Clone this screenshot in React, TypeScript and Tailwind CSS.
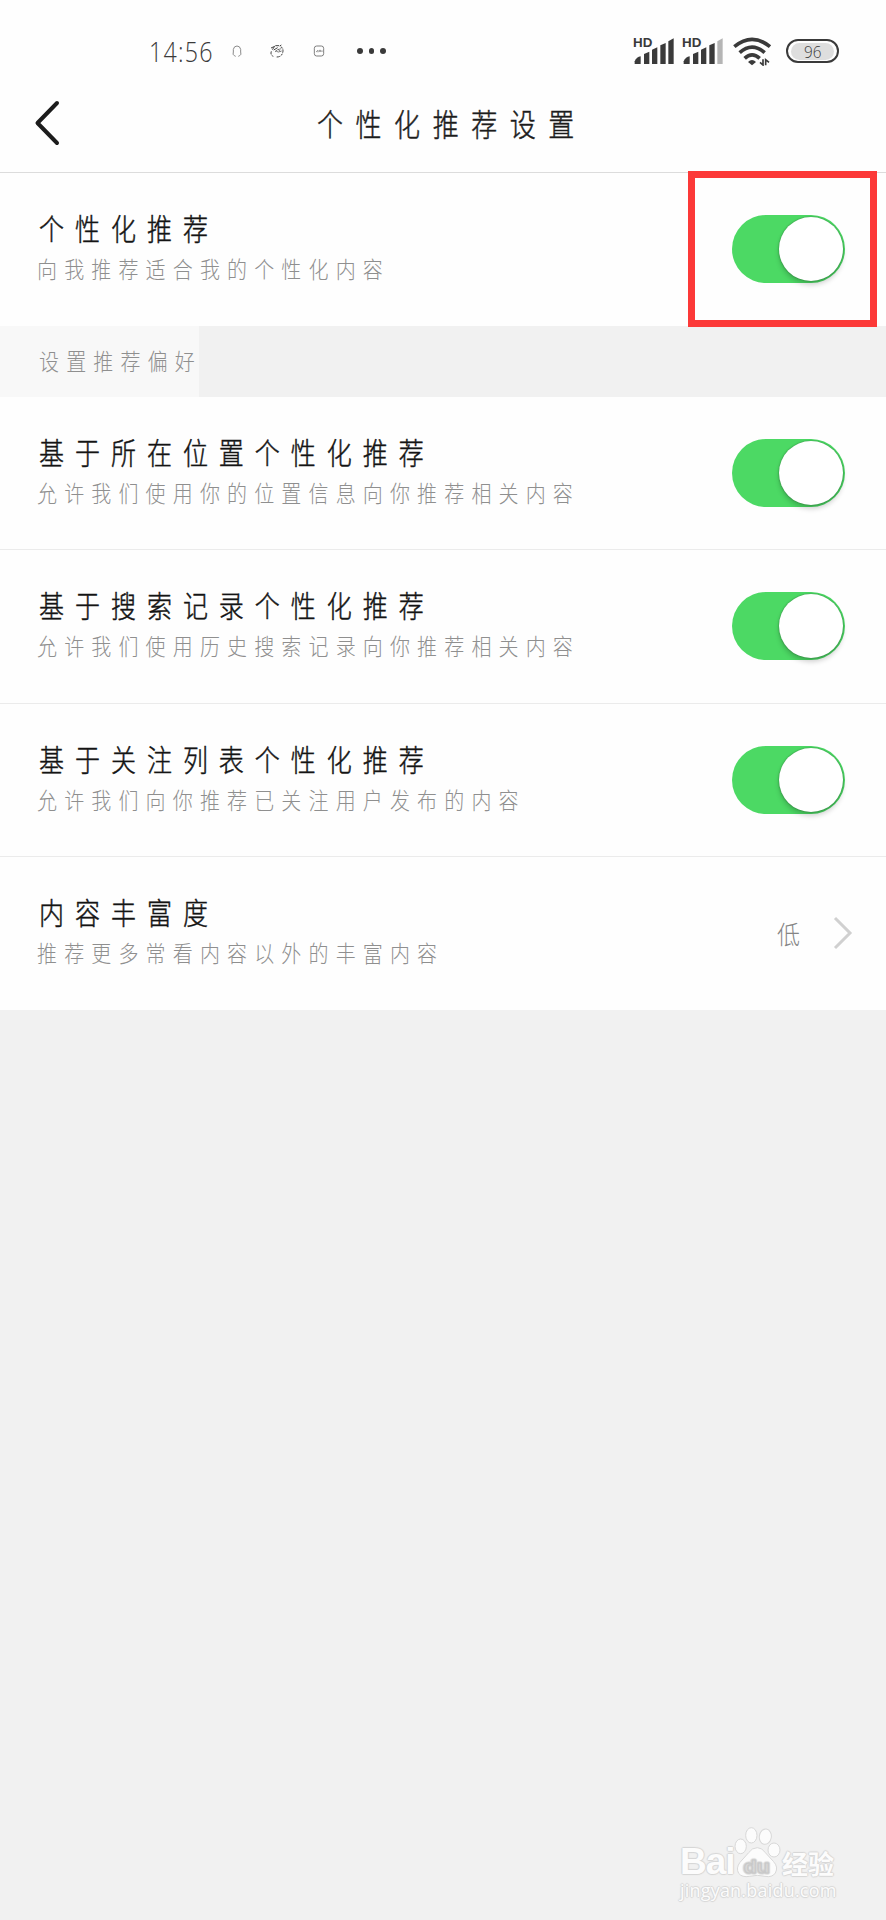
import React, { useState } from "react";

const preferences = [
  {
    title: "基于所在位置个性化推荐",
    desc: "允许我们使用你的位置信息向你推荐相关内容",
  },
  {
    title: "基于搜索记录个性化推荐",
    desc: "允许我们使用历史搜索记录向你推荐相关内容",
  },
  {
    title: "基于关注列表个性化推荐",
    desc: "允许我们向你推荐已关注用户发布的内容",
  },
];

function Signal({ weak = false }: { weak?: boolean }) {
  return (
    <svg className="h-[30px] w-[42px]" viewBox="0 0 126 90" fill="#3a3a3a">
      <text
        x="0"
        y="34"
        fontSize="40"
        fontWeight="700"
        textLength="58"
        lengthAdjust="spacingAndGlyphs"
        fontFamily="Liberation Sans, Arial, sans-serif"
      >
        HD
      </text>
      <path d="M5 84V76Q11 63 23 61V84Z" />
      <path d="M33 84V54L49 47V84Z" />
      <path d="M57 84V41L73 34V84Z" />
      <path d="M82 84V28L98 21V84Z" />
      <path d="M106 84V16L122 7V84Z" fill={weak ? "#b5b5b5" : "#3a3a3a"} />
    </svg>
  );
}

function StatusBar() {
  return (
    <div className="flex h-[80px] items-center pt-[22px] pl-[149px] text-[#3a3a3a]">
      <div className="w-[66px]">
        <span className="inline-block origin-left scale-x-[0.83] font-['Open_Sans',sans-serif] text-[28px] leading-[30px] font-light tracking-[1.5px]">
          14:56
        </span>
      </div>
      <svg className="ml-[16px] h-[14px] w-[12px]" viewBox="0 0 36 42" fill="none" stroke="#8a8a8a" strokeWidth="3">
        <path d="M10 35Q4 32 7 24V16Q9 6 18 6T29 16V24Q32 32 26 35M10 35L14 37M26 35L22 37" />
      </svg>
      <svg className="ml-[26px] h-[16px] w-[16px]" viewBox="0 0 48 48" fill="none" stroke="#444" strokeWidth="3">
        <path d="M7 25Q3 36 13 40M23 42Q40 42 42 24Q42 12 35 12" strokeDasharray="9 3" />
        <path d="M6 15L17 10L10 20M14 21L26 14M19 8H30M32 9L37 6" />
        <path d="M18 27Q24 18 37 17M20 23Q26 31 38 24M27 19L34 25" strokeWidth="2" />
      </svg>
      <svg className="ml-[27px] h-[14px] w-[14px]" viewBox="0 0 42 42" fill="none" stroke="#666" strokeWidth="2.5">
        <rect x="7" y="6" width="28" height="30" rx="7" />
        <path d="M12 24L18 19V25M22 24V19H26V24M30 19V24" strokeWidth="2" />
      </svg>
      <div className="ml-[31px] flex gap-[6px]">
        <i className="size-[5.5px] rounded-full bg-[#3a3a3a]" />
        <i className="size-[5.5px] rounded-full bg-[#3a3a3a]" />
        <i className="size-[5.5px] rounded-full bg-[#3a3a3a]" />
      </div>
      <div className="ml-auto flex items-center pr-[47px]">
        <Signal />
        <div className="ml-[7px]">
          <Signal weak />
        </div>
        <svg className="ml-[9px] h-[30px] w-[39px]" viewBox="0 0 117 90" fill="none" stroke="#3a3a3a" strokeWidth="11">
          <path d="M4 32Q57 -12 111 32" />
          <path d="M20 50Q57 17 95 50" />
          <path d="M35 67Q57 46 80 67" />
          <path d="M45 78Q57 66 69 78L57 88Z" fill="#3a3a3a" stroke="none" />
          <path d="M90 70V87L81 79M98 88V71L108 79" strokeWidth="5" />
        </svg>
        <div className="ml-[14px] flex h-[24px] w-[53px] items-center justify-center rounded-full border-2 border-[#3a3a3a]">
          <div className="flex h-[17px] w-[43px] items-center justify-center rounded-full bg-[#dedede]">
            <span className="inline-block scale-x-90 font-['Open_Sans',sans-serif] text-[17px] leading-[17px] font-light">
              96
            </span>
          </div>
        </div>
      </div>
    </div>
  );
}

function Switch({ label }: { label: string }) {
  const [on, setOn] = useState(true);
  return (
    <button
      role="switch"
      aria-checked={on}
      aria-label={label}
      onClick={() => setOn(!on)}
      className={`flex h-[68px] w-[113px] shrink-0 items-center rounded-full px-[2px] ${
        on ? "justify-end bg-[#4cd964]" : "justify-start bg-[#dcdcdc]"
      }`}
    >
      <span className="size-[64px] rounded-full bg-white shadow-[0_4px_5px_rgba(0,0,0,0.18),0_0_2px_rgba(0,0,0,0.4)]" />
    </button>
  );
}

function Row({
  title,
  desc,
  last = false,
  children,
}: {
  title: string;
  desc: string;
  last?: boolean;
  children: React.ReactNode;
}) {
  return (
    <div
      className={`flex items-start justify-between bg-[#fefefe] pr-[41px] ${
        last ? "h-[153px]" : "h-[153.5px] border-b border-[#ebebeb]"
      }`}
    >
      <div className="pt-[34px] whitespace-nowrap">
        <div className="origin-center scale-y-[1.17] pl-[39px] text-[25px] leading-10 tracking-[10.97px] text-[#141414] [-webkit-text-stroke:0.4px_#141414]">
          {title}
        </div>
        <div className="mt-[2px] scale-y-[1.13] pl-[37px] text-[20px] leading-10 tracking-[7.15px] text-[#8f8f8f]">
          {desc}
        </div>
      </div>
      <div className="flex h-[152px] items-center">{children}</div>
    </div>
  );
}

function Watermark() {
  return (
    <div className="absolute top-[1822px] left-[680px] w-[160px] text-[#fcfcfc] [text-shadow:1px_0_1px_#d6d6d6,-1px_0_1px_#d6d6d6,0_1px_1px_#d6d6d6,0_-1px_1px_#d6d6d6]">
      <div className="flex h-[56px] items-end">
        <span className="mb-[-4px] w-[54px] font-['Liberation_Sans',Arial,sans-serif] text-[37px] leading-[40px] font-bold tracking-[-1px]">
          Bai
        </span>
        <svg className="h-[54px] w-[48px] shrink-0" viewBox="0 0 144 162" fill="#fcfcfc" stroke="#d8d8d8" strokeWidth="3">
          <ellipse cx="20" cy="67" rx="17" ry="22" />
          <ellipse cx="52" cy="34" rx="17" ry="23" />
          <ellipse cx="94" cy="38" rx="18" ry="23" transform="rotate(8 94 38)" />
          <ellipse cx="120" cy="78" rx="18" ry="21" />
          <path d="M70 71Q84 71 94 86L118 112Q134 129 124 147Q115 161 93 157Q70 151 47 157Q24 161 14 148Q5 132 18 115L44 86Q54 71 70 71Z" />
          <text
            x="29"
            y="146"
            fontSize="56"
            fontWeight="700"
            fill="#e6e6e6"
            stroke="#c8c8c8"
            textLength="78"
            lengthAdjust="spacingAndGlyphs"
            fontFamily="Liberation Sans, Arial, sans-serif"
          >
            du
          </text>
        </svg>
        <span className="-mb-px text-[26px] leading-[32px] font-bold">经验</span>
      </div>
      <div className="-mt-[2px] font-['Open_Sans',sans-serif] text-[18px] leading-[28px] font-normal tracking-[0.2px]">
        jingyan.baidu.com
      </div>
    </div>
  );
}

export default function App() {
  return (
    <div className="relative h-[1920px] w-[886px] overflow-hidden bg-[#f1f1f1] font-['Noto_Sans_CJK_SC',sans-serif] font-light">
      <header className="h-[173px] border-b-[1.5px] border-[#dcdcdc] bg-[#fefefe]">
        <StatusBar />
        <div className="flex h-[86px] items-center">
          <svg className="ml-[34px] h-[46px] w-[28px]" viewBox="0 0 28 46" fill="none" stroke="#1c1c1c" strokeWidth="4" strokeLinecap="round" strokeLinejoin="round">
            <path d="M23 3L3.5 23L23 43" />
          </svg>
          <h1 className="ml-[255px] scale-y-[1.2] text-[26px] leading-10 tracking-[12.55px] whitespace-nowrap text-[#1c1c1c] [-webkit-text-stroke:0.4px_#1c1c1c]">
            个性化推荐设置
          </h1>
        </div>
      </header>

      <div className="relative">
        <Row title="个性化推荐" desc="向我推荐适合我的个性化内容" last>
          <Switch label="个性化推荐" />
        </Row>
        <div className="pointer-events-none absolute -top-[2px] left-[688px] h-[156px] w-[189px] border-[7px] border-[#fc3938]" />
      </div>

      <div className="flex h-[70.5px]">
        <div className="flex w-[199px] items-center bg-[#f8f8f8] pl-[39px]">
          <span className="scale-y-[1.13] text-[20px] leading-10 tracking-[7.15px] whitespace-nowrap text-[#8f8f8f]">
            设置推荐偏好
          </span>
        </div>
      </div>

      {preferences.map((item) => (
        <Row key={item.title} title={item.title} desc={item.desc}>
          <Switch label={item.title} />
        </Row>
      ))}
      <Row title="内容丰富度" desc="推荐更多常看内容以外的丰富内容" last>
        <span className="scale-y-110 text-[23px] text-[#858585]">低</span>
        <svg className="-mr-[9px] ml-[33px] h-[34px] w-[21px]" viewBox="0 0 21 34" fill="none" stroke="#d0d0d0" strokeWidth="3">
          <path d="M2 2L17 17L2 32" />
        </svg>
      </Row>

      <Watermark />
    </div>
  );
}
